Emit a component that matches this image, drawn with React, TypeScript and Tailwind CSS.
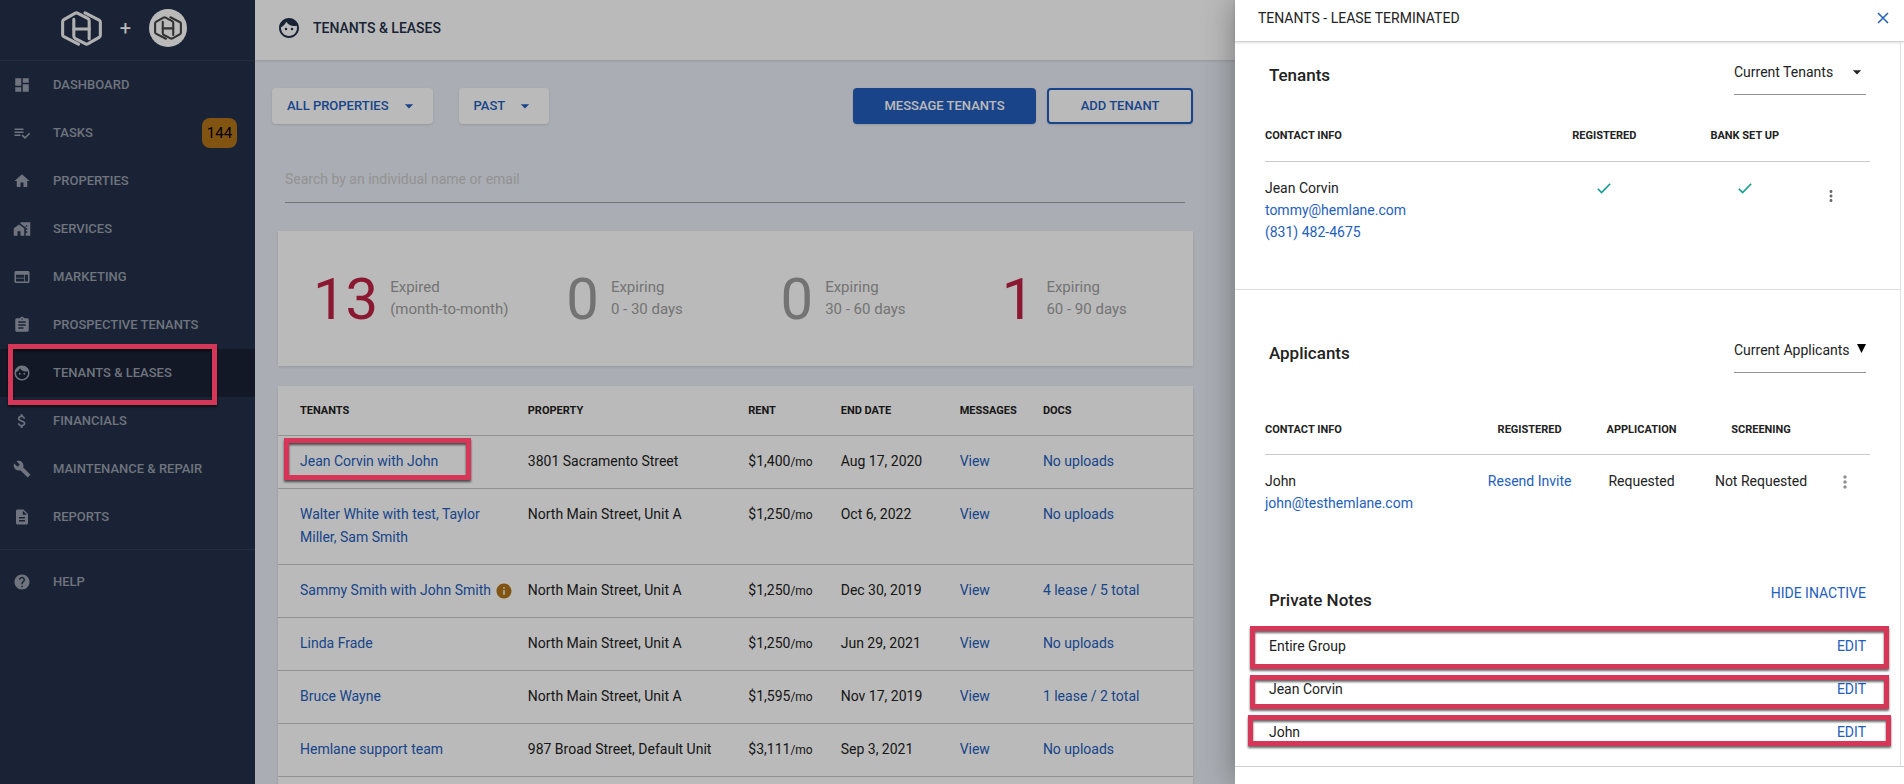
import type { ReactNode } from 'react'
import type { IconType } from 'react-icons'
import {
  MdArrowDropDown,
  MdAssignment,
  MdAttachMoney,
  MdBuild,
  MdDashboard,
  MdDescription,
  MdFace,
  MdHelp,
  MdHome,
  MdHomeWork,
  MdInfo,
  MdMoreVert,
  MdWeb,
} from 'react-icons/md'

interface NavItem {
  label: string
  icon: IconType
  badge?: number
  active?: boolean
}

interface Lease {
  tenants: string
  property: string
  rent: string
  endDate: string
  docs: string
  info?: boolean
  marked?: boolean
}

const PlaylistCheck: IconType = ({ className }) => (
  <svg viewBox="0 0 24 24" fill="currentColor" className={className}>
    <path d="M14 10H2v2h12v-2zm0-4H2v2h12V6zM2 16h8v-2H2v2zm19.5-4.5L23 13l-6.99 7-4.51-4.5L13 14l3.01 3 5.49-5.5z" />
  </svg>
)

const navItems: NavItem[] = [
  { label: 'DASHBOARD', icon: MdDashboard },
  { label: 'TASKS', icon: PlaylistCheck, badge: 144 },
  { label: 'PROPERTIES', icon: MdHome },
  { label: 'SERVICES', icon: MdHomeWork },
  { label: 'MARKETING', icon: MdWeb },
  { label: 'PROSPECTIVE TENANTS', icon: MdAssignment },
  { label: 'TENANTS & LEASES', icon: MdFace, active: true },
  { label: 'FINANCIALS', icon: MdAttachMoney },
  { label: 'MAINTENANCE & REPAIR', icon: MdBuild },
  { label: 'REPORTS', icon: MdDescription },
]

const stats = [
  { value: 13, title: 'Expired', range: '(month-to-month)' },
  { value: 0, title: 'Expiring', range: '0 - 30 days' },
  { value: 0, title: 'Expiring', range: '30 - 60 days' },
  { value: 1, title: 'Expiring', range: '60 - 90 days' },
]

const leases: Lease[] = [
  { tenants: 'Jean Corvin with John', property: '3801 Sacramento Street', rent: '$1,400', endDate: 'Aug 17, 2020', docs: 'No uploads', marked: true },
  { tenants: 'Walter White with test, Taylor Miller, Sam Smith', property: 'North Main Street, Unit A', rent: '$1,250', endDate: 'Oct 6, 2022', docs: 'No uploads' },
  { tenants: 'Sammy Smith with John Smith', property: 'North Main Street, Unit A', rent: '$1,250', endDate: 'Dec 30, 2019', docs: '4 lease / 5 total', info: true },
  { tenants: 'Linda Frade', property: 'North Main Street, Unit A', rent: '$1,250', endDate: 'Jun 29, 2021', docs: 'No uploads' },
  { tenants: 'Bruce Wayne', property: 'North Main Street, Unit A', rent: '$1,595', endDate: 'Nov 17, 2019', docs: '1 lease / 2 total' },
  { tenants: 'Hemlane support team', property: '987 Broad Street, Default Unit', rent: '$3,111', endDate: 'Sep 3, 2021', docs: 'No uploads' },
]

const notes = [
  { name: 'Entire Group', mark: 'top-0 h-[43px] -left-[19px] -right-[23px]' },
  { name: 'Jean Corvin', mark: 'top-[6px] h-[34px] -left-[19px] -right-[23px]' },
  { name: 'John', mark: 'top-[3px] h-[31px] -left-[21px] -right-[25px]' },
]

// Red frame that calls out a part of the page, drawn above the scrim
const Callout = ({ className }: { className: string }) => (
  <span
    className={`pointer-events-none absolute z-40 border-[5px] border-[#d63658] drop-shadow-[0_2px_1px_rgba(0,0,0,0.6)] ${className}`}
  />
)

const Logo = ({ className }: { className: string }) => (
  <svg viewBox="0 0 40 34" fill="none" stroke="currentColor" strokeWidth="3" strokeLinejoin="round" strokeLinecap="round" className={className}>
    <path d="M17 32.3 L2.8 25 Q1.6 24.3 1.6 23 V10.5 Q1.6 9 2.8 8.3 L13.5 2.2 Q15 1.4 16.5 2.2 L26 7.2 Q27.5 8 27.5 9.5 V27" />
    <path d="M23.5 1.7 L37.2 8.8 Q38.4 9.5 38.4 11 V23.5 Q38.4 25 37.2 25.7 L26.5 31.8 Q25 32.6 23.5 31.8 L14 26.8 Q12.5 26 12.5 24.5 V8" />
    <path d="M12.5 17.5 H27.5" />
  </svg>
)

function Sidebar() {
  return (
    <aside className="w-[255px] shrink-0 bg-[#243149] text-[#989fad]">
      <div className="flex h-[61px] items-center border-b border-[#2c3f58] pb-1 pl-[61px]">
        <Logo className="h-[35px] w-[41px] text-[#f2f2f2]" />
        <span className="w-[47px] text-center text-xl leading-none text-white">+</span>
        <span className="flex size-[38px] items-center justify-center rounded-full bg-white">
          <Logo className="h-6 w-7 text-[#444444]" />
        </span>
      </div>
      <nav>
        {navItems.map(({ label, icon: Icon, badge, active }) => (
          <a
            key={label}
            href="#"
            className={`relative flex h-12 items-center pl-[13px] pr-[18px] text-[13px] font-medium ${active ? 'bg-[#192135]' : ''}`}
          >
            <Icon className="size-[18px]" />
            <span className="ml-[22px] grow">{label}</span>
            {badge && (
              <span className="flex h-[30px] w-[35px] items-center justify-center rounded-lg bg-[#b37419] text-[15px] font-normal text-black">
                {badge}
              </span>
            )}
            {active && <Callout className="-top-[5px] left-2 h-[61px] w-[209px]" />}
          </a>
        ))}
        <div className="mt-2 border-t border-[#2c3f58] pt-2">
          <a href="#" className="flex h-12 items-center pl-[13px] text-[13px] font-medium">
            <MdHelp className="size-[18px]" />
            <span className="ml-[22px]">HELP</span>
          </a>
        </div>
      </nav>
    </aside>
  )
}

const FilterButton = ({ children }: { children: ReactNode }) => (
  <button
    type="button"
    className="flex h-9 items-center gap-[10px] rounded-sm bg-white pl-[15px] pr-[14px] text-[13px] font-medium text-[#245ebd] shadow"
  >
    {children}
    <MdArrowDropDown className="size-5" />
  </button>
)

function LeaseTable() {
  return (
    <div className="bg-white pb-12 shadow">
      <table className="w-full table-fixed text-left text-sm leading-[23px] text-[#222222]">
        <colgroup>
          <col className="w-[27.3%]" />
          <col className="w-[24.1%]" />
          <col className="w-[10.1%]" />
          <col className="w-[13%]" />
          <col className="w-[9.1%]" />
          <col />
        </colgroup>
        <thead>
          <tr className="h-[49px] border-b border-[#c8c8c8] text-[11px]">
            <th className="pl-[22px]">TENANTS</th>
            <th>PROPERTY</th>
            <th>RENT</th>
            <th>END DATE</th>
            <th>MESSAGES</th>
            <th>DOCS</th>
          </tr>
        </thead>
        <tbody>
          {leases.map(lease => (
            <tr key={lease.tenants} className="border-b border-[#c8c8c8] align-top">
              <td className={`relative pt-[14px] pr-8 pb-[15px] pl-[22px] ${lease.info ? 'whitespace-nowrap' : ''}`}>
                <a href="#" className="text-[#245ebd]">{lease.tenants}</a>
                {lease.info && <MdInfo className="ml-1 inline size-[18px] text-[#b37419]" />}
                {lease.marked && <Callout className="top-[2px] left-[6px] h-[42px] w-[187px]" />}
              </td>
              <td className="pt-[14px] pb-[15px]">{lease.property}</td>
              <td className="pt-[14px] pb-[15px]">
                {lease.rent}
                <span className="text-xs">/mo</span>
              </td>
              <td className="pt-[14px] pb-[15px]">{lease.endDate}</td>
              <td className="pt-[14px] pb-[15px]"><a href="#" className="text-[#245ebd]">View</a></td>
              <td className="pt-[14px] pb-[15px]"><a href="#" className="text-[#245ebd]">{lease.docs}</a></td>
            </tr>
          ))}
        </tbody>
      </table>
    </div>
  )
}

function LeasesPage() {
  return (
    <main className="grow bg-[#eaeef6]">
      <header className="flex h-[60px] items-center bg-white pb-[5px] pl-[22px] text-[#243149] shadow">
        <MdFace className="size-6" />
        <h1 className="ml-3 text-sm font-medium">TENANTS &amp; LEASES</h1>
      </header>
      <div className="max-w-[938px] pt-7">
        <div className="flex pl-[17px]">
          <FilterButton>ALL PROPERTIES</FilterButton>
          <div className="ml-[26px]">
            <FilterButton>PAST</FilterButton>
          </div>
          <button type="button" className="ml-auto h-9 w-[183px] rounded-sm bg-[#245ebd] text-[13px] font-medium text-white shadow">
            MESSAGE TENANTS
          </button>
          <button type="button" className="ml-[11px] h-9 w-[146px] rounded-sm border-2 border-[#245ebd] bg-white text-[13px] font-medium text-[#245ebd] shadow">
            ADD TENANT
          </button>
        </div>
        <div className="mt-8 ml-[30px] mr-2">
          <input
            type="search"
            aria-label="Search tenants"
            placeholder="Search by an individual name or email"
            className="h-[47px] w-full border-b border-[#9b9f9e] text-sm text-[#222222] outline-none placeholder:text-[#c9c9c9]"
          />
        </div>
        <div className="mt-7 ml-[23px] space-y-5">
          <section className="grid h-[135px] grid-cols-[253fr_214fr_221fr_191fr] items-center bg-white pl-[35px] shadow">
            {stats.map(stat => (
              <div key={stat.range} className="flex items-center gap-3">
                <span className={`text-[58px] leading-none ${stat.value > 0 ? 'text-[#be2144]' : 'text-[#9e9e9e]'}`}>
                  {stat.value}
                </span>
                <p className="pb-[2px] text-[15px] leading-[22px] text-[#a0a0a0]">
                  {stat.title}
                  <br />
                  {stat.range}
                </p>
              </div>
            ))}
          </section>
          <LeaseTable />
        </div>
      </div>
    </main>
  )
}

const Check = () => (
  <svg viewBox="0 0 14 11" fill="none" stroke="#149c8c" strokeWidth="1.6" className="mx-auto mt-[7px] h-[11px] w-[14px]">
    <path d="M0.8 5.8 L4.6 9.6 L13.2 0.8" />
  </svg>
)

interface PanelHeadProps {
  title: string
  option: string
  arrow: ReactNode
}

const PanelHead = ({ title, option, arrow }: PanelHeadProps) => (
  <div className="flex items-start justify-between px-[34px]">
    <h2 className="pt-[3px] text-[17px] leading-6 font-medium">{title}</h2>
    <div className="relative">
      <select
        aria-label={`${title} filter`}
        className="h-[35px] w-[132px] appearance-none border-b border-[#949494] pb-[10px] text-sm leading-6 outline-none"
      >
        <option>{option}</option>
      </select>
      {arrow}
    </div>
  </div>
)

function TenantDrawer() {
  return (
    <aside className="absolute inset-y-0 right-0 z-30 w-[35.14%] bg-white text-sm text-[#222222] shadow-[0_0_30px_rgba(0,0,0,0.35)]">
      <header className="flex h-[42px] items-start justify-between border-b border-[#d4d4d4] pt-[6px] pr-[15px] pl-[23px] shadow-sm">
        <h2 className="leading-6">TENANTS - LEASE TERMINATED</h2>
        <button type="button" aria-label="Close" className="mt-[6px] text-[#245ebd]">
          <svg viewBox="0 0 12 12" fill="none" stroke="currentColor" strokeWidth="1.5" className="size-3">
            <path d="M1 1 L11 11 M11 1 L1 11" />
          </svg>
        </button>
      </header>

      <div className="mr-[3px] border-r border-[#e2e2e2]">
        <section className="border-b border-[#dedede] pt-[18px] pb-[46px]">
          <PanelHead
            title="Tenants"
            option="Current Tenants"
            arrow={<MdArrowDropDown className="pointer-events-none absolute top-[2px] -right-[1px] size-5" />}
          />
          <div className="mt-[17px] px-[30px]">
            <table className="w-full table-fixed leading-[22px]">
              <colgroup>
                <col className="w-[44.4%]" />
                <col className="w-[23.4%]" />
                <col className="w-[23%]" />
                <col />
              </colgroup>
              <thead>
                <tr className="h-[49px] border-b border-[#c8c8c8] text-[11px]">
                  <th className="text-left">CONTACT INFO</th>
                  <th>REGISTERED</th>
                  <th>BANK SET UP</th>
                  <td />
                </tr>
              </thead>
              <tbody>
                <tr className="align-top">
                  <td className="pt-[15px]">
                    Jean Corvin
                    <br />
                    <a href="#" className="text-[#245ebd]">tommy@hemlane.com</a>
                    <br />
                    <a href="#" className="text-[#245ebd]">(831) 482-4675</a>
                  </td>
                  <td className="pt-[14px]"><Check /></td>
                  <td className="pt-[14px]"><Check /></td>
                  <td className="pt-[25px]">
                    <button type="button" aria-label="Tenant actions" className="ml-2 block text-[#6b6b6b]">
                      <MdMoreVert className="size-[18px]" />
                    </button>
                  </td>
                </tr>
              </tbody>
            </table>
          </div>
        </section>

        <section className="pt-12">
          <PanelHead
            title="Applicants"
            option="Current Applicants"
            arrow={
              <svg viewBox="0 0 9 9" className="pointer-events-none absolute top-[6px] right-0 size-[9px]">
                <path d="M0 0 H9 L4.5 9 Z" fill="#000" />
              </svg>
            }
          />
          <div className="mt-[33px] px-[30px]">
            <table className="w-full table-fixed text-center leading-[22px]">
              <colgroup>
                <col className="w-[34.5%]" />
                <col className="w-[18.5%]" />
                <col className="w-[18.5%]" />
                <col className="w-[21%]" />
                <col />
              </colgroup>
              <thead>
                <tr className="h-[49px] border-b border-[#c8c8c8] text-[11px]">
                  <th className="text-left">CONTACT INFO</th>
                  <th>REGISTERED</th>
                  <th>APPLICATION</th>
                  <th>SCREENING</th>
                  <td />
                </tr>
              </thead>
              <tbody>
                <tr className="align-top">
                  <td className="pt-[15px] text-left">
                    John
                    <br />
                    <a href="#" className="text-[#245ebd]">john@testhemlane.com</a>
                  </td>
                  <td className="pt-[15px]"><a href="#" className="text-[#245ebd]">Resend Invite</a></td>
                  <td className="pt-[15px]">Requested</td>
                  <td className="pt-[15px]">Not Requested</td>
                  <td className="pt-[17px]">
                    <button type="button" aria-label="Applicant actions" className="ml-[10px] block text-[#909090]">
                      <MdMoreVert className="size-5" />
                    </button>
                  </td>
                </tr>
              </tbody>
            </table>
          </div>
        </section>

        <section className="px-[34px] pt-[67px] pb-[11px]">
          <div className="flex items-start justify-between leading-6">
            <h2 className="pt-[7px] text-[17px] font-medium">Private Notes</h2>
            <button type="button" className="text-[#245ebd]">HIDE INACTIVE</button>
          </div>
          <ul className="mt-[14px]">
            {notes.map(note => (
              <li key={note.name} className="relative flex h-[43px] items-start justify-between pt-[9px] leading-[22px]">
                <span>{note.name}</span>
                <button type="button" className="text-[#245ebd]">EDIT</button>
                <Callout className={note.mark} />
              </li>
            ))}
          </ul>
        </section>
      </div>
      <div className="border-t border-[#cfcfcf]" />
    </aside>
  )
}

export default function App() {
  return (
    <div className="relative flex h-screen overflow-hidden font-[Roboto,sans-serif]">
      <Sidebar />
      <LeasesPage />
      <div className="absolute inset-0 z-20 bg-black/27" />
      <TenantDrawer />
    </div>
  )
}
